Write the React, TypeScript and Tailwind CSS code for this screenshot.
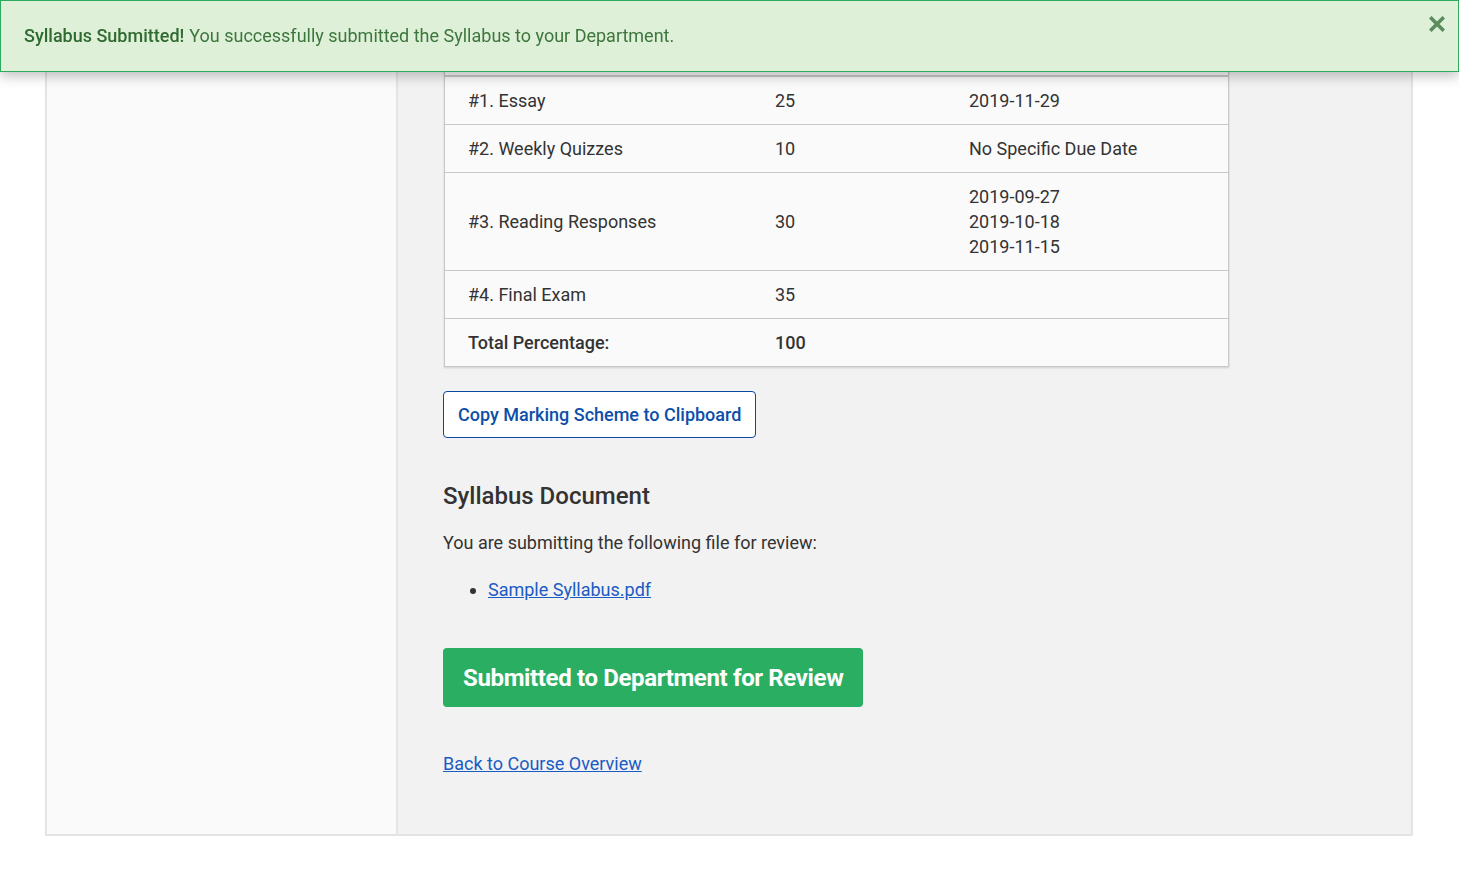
import React from "react";

const rows = [
  { name: "#1. Essay", weight: "25", due: ["2019-11-29"] },
  { name: "#2. Weekly Quizzes", weight: "10", due: ["No Specific Due Date"] },
  { name: "#3. Reading Responses", weight: "30", due: ["2019-09-27", "2019-10-18", "2019-11-15"] },
  { name: "#4. Final Exam", weight: "35", due: [] },
];

export default function App() {
  return (
    <div className="min-h-[875px] bg-white text-[#333333]" style={{ fontFamily: "Roboto, 'Liberation Sans', sans-serif" }}>
      <div className="fixed left-0 top-0 z-10 flex h-[72px] w-[1459px] items-center border border-[#2eaa5c] bg-[#dff0d8] pb-[1px] pl-[23px] text-[18px] text-[#3c763d] shadow-[0_4px_12px_rgba(0,0,0,0.25)]">
        <span className="font-medium text-[#2f6a30]">Syllabus Submitted!</span>
        <span className="ml-[5px]">You successfully submitted the Syllabus to your Department.</span>
        <span className="absolute right-[13px] top-[15px] leading-none">
          <svg width="16" height="16" viewBox="0 0 16 16"><path d="M2.5 2.5 L13.5 13.5 M13.5 2.5 L2.5 13.5" stroke="#5a8c5c" strokeWidth="3.6" strokeLinecap="square" /></svg>
        </span>
      </div>
      <div className="pl-[45px]">
        <div className="flex w-[1368px] border-2 border-t-0 border-[#e4e4e4]">
          <div className="w-[351px] shrink-0 border-r-2 border-[#e4e4e4] bg-[#fafafa]" />
          <div className="flex-1 bg-[#f2f2f2] pl-[45px] pt-[28px] pb-[57px]">
            <div className="ml-[1px] w-[785px] border border-[#c8c8c8] bg-[#fafafa] shadow-[0_1px_2px_rgba(0,0,0,0.15)]">
              <div className="flex h-[48px] items-center border-b-2 border-[#c8c8c8] text-[18px] font-medium">
                <div className="w-[330px] pl-[23px]">Assessment</div>
                <div className="w-[194px]">Weight</div>
                <div>Due Date</div>
              </div>
              {rows.map((r) => (
                <div key={r.name} className="flex min-h-[48px] items-center border-b border-[#c8c8c8] text-[18px]">
                  <div className="w-[330px] pl-[23px]">{r.name}</div>
                  <div className="w-[194px]">{r.weight}</div>
                  <div className={r.due.length > 1 ? "py-[11px] leading-[25px]" : ""}>
                    {r.due.map((d) => (
                      <div key={d}>{d}</div>
                    ))}
                  </div>
                </div>
              ))}
              <div className="flex h-[47px] items-center text-[18px] font-medium">
                <div className="w-[330px] pl-[23px]">Total Percentage:</div>
                <div className="w-[194px]">100</div>
              </div>
            </div>
            <button className="mt-[24px] h-[47px] rounded-[4px] border border-[#0d47a1] bg-white px-[14px] text-[18px] font-medium text-[#0d4fa8]">
              Copy Marking Scheme to Clipboard
            </button>
            <h2 className="mt-[42px] text-[24px] font-medium leading-[32px] text-[#333]">Syllabus Document</h2>
            <p className="mt-[18px] text-[18px] leading-[26px]">You are submitting the following file for review:</p>
            <ul className="mt-[21px] list-disc pl-[45px] text-[18px] leading-[26px]">
              <li>
                <a href="#" className="text-[#1a5bc4] underline">Sample Syllabus.pdf</a>
              </li>
            </ul>
            <button className="mt-[45px] h-[59px] rounded-[4px] bg-[#29ae62] px-[20px] text-[24px] font-bold tracking-[-0.36px] text-white">
              Submitted to Department for Review
            </button>
            <div className="mt-[44px] text-[18px] leading-[26px]">
              <a href="#" className="text-[#1a5bc4] underline">Back to Course Overview</a>
            </div>
          </div>
        </div>
      </div>
    </div>
  );
}
